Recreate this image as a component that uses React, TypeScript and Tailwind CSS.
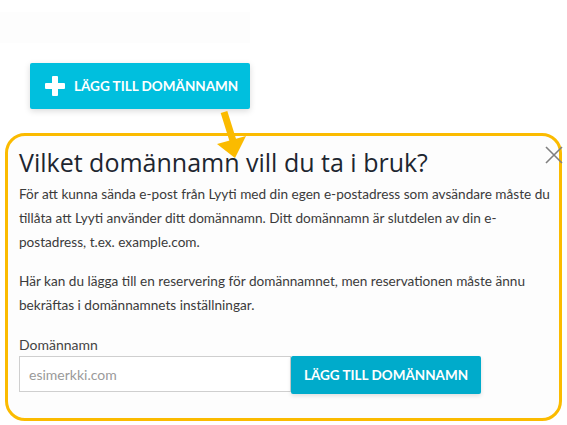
const PlusIcon = () => (
  <svg width="20" height="20" viewBox="0 0 20 20">
    <rect x="7" y="0" width="6" height="20" rx="1" fill="white" />
    <rect x="0" y="7" width="20" height="6" rx="1" fill="white" />
  </svg>
);

const Arrow = () => (
  <svg
    className="absolute left-[210px] top-[108px] pointer-events-none"
    width="44"
    height="54"
    viewBox="0 0 44 54"
  >
    <line x1="14" y1="4" x2="24" y2="36" stroke="#fbbb00" strokeWidth="7" />
    <polygon points="7,36 36,28 25,50" fill="#fbbb00" />
  </svg>
);

const CloseIcon = () => (
  <svg width="18" height="18" viewBox="0 0 18 18">
    <path d="M1 1 L17 17 M17 1 L1 17" stroke="#808080" strokeWidth="1.6" />
  </svg>
);

export default function App() {
  return (
    <div className="relative w-[567px] h-[425px] overflow-hidden bg-white font-['Lato',sans-serif]">
      <div className="mt-[12px] h-[31px] w-[250px] bg-[#fdfdfd]" />

      <button className="ml-[30px] mt-[20px] flex h-[46px] w-[220px] items-center gap-[9px] rounded-[2px] bg-[#00bfde] pl-[15px] text-[13.5px] font-bold text-white shadow-[0_2px_6px_rgba(0,0,0,0.15)]">
        <PlusIcon />
        LÄGG TILL DOMÄNNAMN
      </button>

      <div className="relative ml-[5px] mt-[24px] h-[288px] w-[557px] rounded-[20px] border-[3px] border-[#fbbb00] bg-[#fdfdfd] pl-[11px] pr-[4px] pt-[9px]">
        <h2 className="text-[25px] leading-[34px] text-[#1d2630] font-['Open_Sans',sans-serif]">
          Vilket domännamn vill du ta i bruk?
        </h2>
        <div className="absolute right-[-4px] top-[10px]">
          <CloseIcon />
        </div>
        <p className="mt-[3px] text-[13.6px] leading-[24px] text-[#3b3b3b]">
          För att kunna sända e-post från Lyyti med din egen e-postadress som avsändare måste du tillåta att Lyyti använder ditt domännamn. Ditt domännamn är slutdelen av din e-postadress, t.ex. example.com.
        </p>
        <p className="mt-[15px] text-[13.6px] leading-[24px] text-[#3b3b3b]">
          Här kan du lägga till en reservering för domännamnet, men reservationen måste ännu bekräftas i domännamnets inställningar.
        </p>
        <label className="mt-[18px] block text-[14px] leading-[20px] text-[#444]">Domännamn</label>
        <div className="mt-[1px] flex items-start">
          <input
            placeholder="esimerkki.com"
            className="h-[36px] w-[272px] border border-[#cfcfcf] bg-white px-[9px] text-[14px] text-[#333] placeholder:text-[#9a9a9a] outline-none"
          />
          <button className="h-[38px] w-[190px] rounded-[2px] bg-[#00abcb] text-[13.5px] font-bold text-white shadow-[0_2px_4px_rgba(0,0,0,0.12)]">
            LÄGG TILL DOMÄNNAMN
          </button>
        </div>
      </div>

      <Arrow />
    </div>
  );
}
